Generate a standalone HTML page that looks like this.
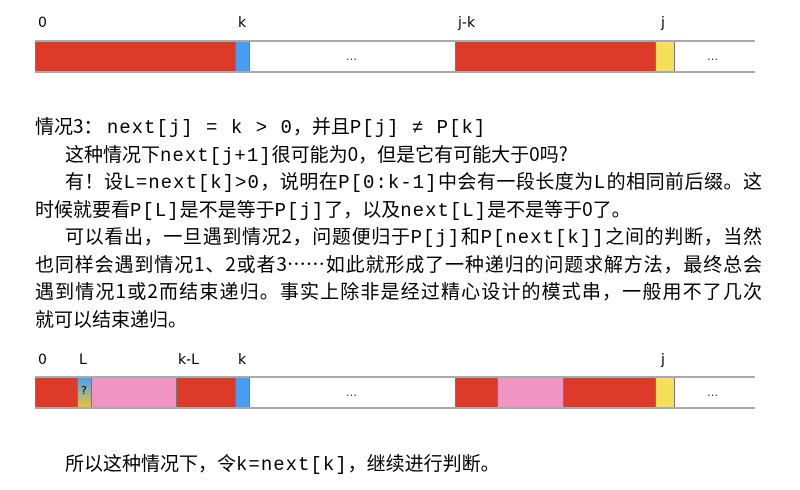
<!DOCTYPE html>
<html><head><meta charset="utf-8"><style>
body{margin:0;width:800px;height:490px;background:#fff;position:relative;overflow:hidden;font-family:"Liberation Serif","Noto Sans CJK SC",serif;}
.lbl{position:absolute;font-family:"DejaVu Sans","Liberation Sans",sans-serif;font-size:14px;color:#000;}
.bar{position:absolute;left:35px;width:720px;border-top:2px solid #aaa;border-bottom:2px solid #aaa;}
.cell{position:absolute;top:0;bottom:0;box-sizing:border-box;border-left:1px solid #777;border-right:1px solid #777;}
.dots{position:absolute;font-family:"DejaVu Sans",sans-serif;font-size:11px;color:#333;}
.t{position:absolute;font-size:19px;line-height:27px;height:27px;white-space:nowrap;color:#000;font-family:"Noto Sans CJK SC",sans-serif;}
.t code{font-family:"Liberation Mono",monospace;font-size:19px;letter-spacing:1px;}
.j{text-align:justify;text-align-last:justify;white-space:normal;overflow:hidden;}
</style></head><body>
<div class="lbl" style="left:38px;top:15px">0</div>
<div class="lbl" style="left:238px;top:15px">k</div>
<div class="lbl" style="left:458px;top:15px">j-k</div>
<div class="lbl" style="left:661px;top:15px">j</div>
<div class="bar" style="top:40px;height:29px">
<div class="cell" style="left:0;width:201px;background:#db3b28"></div>
<div class="cell" style="left:200px;width:15px;background:#479ff5"></div>
<div class="cell" style="left:420px;width:201px;background:#db3b28"></div>
<div class="cell" style="left:620px;width:20px;background:#f6e05a"></div>
</div>
<div class="dots" style="left:346px;top:50px">…</div>
<div class="dots" style="left:707px;top:50px">…</div>

<div class="t" style="left:35px;top:112px">情况3：&nbsp;<code>next[j] = k &gt; 0</code>，并且<code>P[j] ≠ P[k]</code></div>
<div class="t" style="left:65px;top:140px">这种情况下<code>next[j+1]</code>很可能为0，但是它有可能大于0吗?</div>
<div class="t j" style="left:65px;top:167px;width:697px">有！设<code>L=next[k]&gt;0</code>，说明在<code>P[0:k-1]</code>中会有一段长度为<code>L</code>的相同前后缀。这</div>
<div class="t" style="left:35px;top:195px">时候就要看<code>P[L]</code>是不是等于<code>P[j]</code>了，以及<code>next[L]</code>是不是等于0了。</div>
<div class="t j" style="left:65px;top:222px;width:697px">可以看出，一旦遇到情况2，问题便归于<code>P[j]</code>和<code>P[next[k]]</code>之间的判断，当然</div>
<div class="t j" style="left:35px;top:250px;width:727px">也同样会遇到情况1、2或者3……如此就形成了一种递归的问题求解方法，最终总会</div>
<div class="t j" style="left:35px;top:277px;width:727px">遇到情况1或2而结束递归。事实上除非是经过精心设计的模式串，一般用不了几次</div>
<div class="t" style="left:35px;top:305px">就可以结束递归。</div>

<div class="lbl" style="left:38px;top:352px">0</div>
<div class="lbl" style="left:79px;top:352px">L</div>
<div class="lbl" style="left:178px;top:352px">k-L</div>
<div class="lbl" style="left:238px;top:352px">k</div>
<div class="lbl" style="left:661px;top:352px">j</div>
<div class="bar" style="top:376px;height:29px">
<div class="cell" style="left:0;width:43px;background:#db3b28"></div>
<div class="cell" style="left:42px;width:15px;background:linear-gradient(#479ff5,#e8c23a)"><span style="position:absolute;left:3px;top:6px;font-size:11px;font-family:'DejaVu Sans',sans-serif">?</span></div>
<div class="cell" style="left:56px;width:86px;background:#f094c4"></div>
<div class="cell" style="left:141px;width:60px;background:#db3b28"></div>
<div class="cell" style="left:200px;width:15px;background:#479ff5"></div>
<div class="cell" style="left:420px;width:43px;background:#db3b28"></div>
<div class="cell" style="left:462px;width:67px;background:#f094c4"></div>
<div class="cell" style="left:528px;width:93px;background:#db3b28"></div>
<div class="cell" style="left:620px;width:20px;background:#f6e05a"></div>
</div>
<div class="dots" style="left:346px;top:386px">…</div>
<div class="dots" style="left:707px;top:386px">…</div>

<div class="t" style="left:65px;top:449px">所以这种情况下，令<code>k=next[k]</code>，继续进行判断。</div>
</body></html>
